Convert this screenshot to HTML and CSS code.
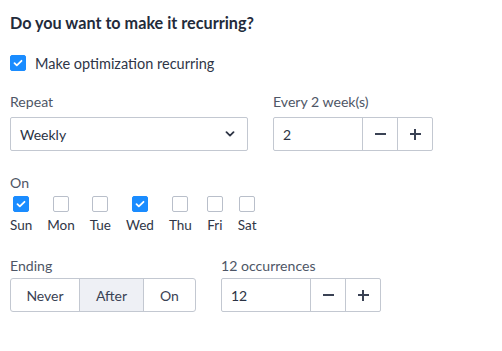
FILE: index.html
```html
<!DOCTYPE html>
<html>
<head>
<meta charset="utf-8">
<link rel="stylesheet" href="styles.css">
</head>
<body>
<div class="panel">
  <h2 class="title">Do you want to make it recurring?</h2>
  <label class="check-row">
    <span class="box checked"><svg viewBox="0 0 16 16" width="16" height="16"><path d="M4.5 8.2l2.3 2.2 4.7-4.6" fill="none" stroke="#fff" stroke-width="1.8" stroke-linecap="round" stroke-linejoin="round"/></svg></span>
    <span class="check-label">Make optimization recurring</span>
  </label>

  <div class="row row-repeat">
    <div class="field field-repeat">
      <div class="label">Repeat</div>
      <div class="select">
        <span>Weekly</span>
        <svg class="chev" viewBox="0 0 10 6" width="10" height="6"><path d="M1.5 1.2L5 4.6l3.5-3.4" fill="none" stroke="#2e3545" stroke-width="1.8" stroke-linecap="round" stroke-linejoin="round"/></svg>
      </div>
    </div>
    <div class="field">
      <div class="label">Every 2 week(s)</div>
      <div class="stepper">
        <div class="num">2</div>
        <div class="btn"><span class="minus"></span></div>
        <div class="btn"><span class="plus"></span></div>
      </div>
    </div>
  </div>

  <div class="days-block">
    <div class="label">On</div>
    <div class="days">
      <div class="day"><span class="box checked"><svg viewBox="0 0 16 16" width="16" height="16"><path d="M4.5 8.2l2.3 2.2 4.7-4.6" fill="none" stroke="#fff" stroke-width="1.8" stroke-linecap="round" stroke-linejoin="round"/></svg></span><span class="day-name">Sun</span></div>
      <div class="day"><span class="box"></span><span class="day-name">Mon</span></div>
      <div class="day"><span class="box"></span><span class="day-name">Tue</span></div>
      <div class="day"><span class="box checked"><svg viewBox="0 0 16 16" width="16" height="16"><path d="M4.5 8.2l2.3 2.2 4.7-4.6" fill="none" stroke="#fff" stroke-width="1.8" stroke-linecap="round" stroke-linejoin="round"/></svg></span><span class="day-name">Wed</span></div>
      <div class="day"><span class="box"></span><span class="day-name">Thu</span></div>
      <div class="day"><span class="box"></span><span class="day-name">Fri</span></div>
      <div class="day"><span class="box"></span><span class="day-name">Sat</span></div>
    </div>
  </div>

  <div class="row row-ending">
    <div class="field">
      <div class="label label-tight">Ending</div>
      <div class="segmented">
        <div class="seg seg-never">Never</div>
        <div class="seg seg-after active">After</div>
        <div class="seg seg-on">On</div>
      </div>
    </div>
    <div class="field">
      <div class="label label-tight">12 occurrences</div>
      <div class="stepper">
        <div class="num">12</div>
        <div class="btn"><span class="minus"></span></div>
        <div class="btn"><span class="plus"></span></div>
      </div>
    </div>
  </div>
</div>
</body>
</html>
```

FILE: styles.css
```css
* { box-sizing: border-box; }
html, body { margin: 0; padding: 0; background: #fff; }
body {
  font-family: Lato, "Noto Sans", sans-serif;
  color: #2b3344;
  width: 502px;
  height: 351px;
  overflow: hidden;
}
.panel { padding: 13px 10px 0 10px; }
.title {
  margin: 0;
  font-size: 16.2px;
  font-weight: 700;
  line-height: 20px;
  color: #232b3b;
}
.check-row {
  display: flex;
  align-items: center;
  margin-top: 20px;
  height: 20px;
}
.box {
  width: 16px;
  height: 16px;
  border: 1px solid #b9bfca;
  border-radius: 2px;
  background: #fff;
  display: inline-flex;
  align-items: center;
  justify-content: center;
  flex: none;
}
.box.checked {
  background: #1a8cff;
  border-color: #1a8cff;
}
.box svg { display: block; margin: -1px; }
.check-label {
  margin-left: 9px;
  font-size: 14.5px;
  color: #2f3647;
}
.label {
  font-size: 14.1px;
  color: #4e5666;
  line-height: 18px;
  margin-bottom: 6px;
}
.label-tight { margin-bottom: 3px; }
.row { display: flex; }
.row-repeat { margin-top: 20px; gap: 25px; }
.field-repeat { width: 238px; }
.select {
  height: 34px;
  border: 1px solid #c3c8d1;
  border-radius: 2px;
  display: flex;
  align-items: center;
  justify-content: space-between;
  padding: 0 12px 0 9px;
  font-size: 14px;
  color: #2b3344;
}
.chev { display: block; }
.stepper {
  display: flex;
  height: 34px;
  border: 1px solid #c3c8d1;
  border-radius: 2px;
}
.num {
  width: 88px;
  display: flex;
  align-items: center;
  padding-left: 9px;
  font-size: 14px;
  color: #2b3344;
}
.btn {
  width: 35px;
  border-left: 1px solid #c3c8d1;
  position: relative;
}
.minus, .plus {
  position: absolute;
  left: 50%;
  top: 50%;
  width: 11px;
  height: 2px;
  margin: -1px 0 0 -5.5px;
  background: #3a4254;
}
.plus::after {
  content: "";
  position: absolute;
  left: 4.5px;
  top: -4.5px;
  width: 2px;
  height: 11px;
  background: #3a4254;
}
.days-block { margin-top: 23px; }
.days-block .label { margin-bottom: 4px; }
.days { display: flex; gap: 15px; }
.day {
  display: flex;
  flex-direction: column;
  align-items: center;
  gap: 4px;
}
.day-name {
  font-size: 13.5px;
  color: #2f3647;
  line-height: 18px;
}
.row-ending { margin-top: 23px; gap: 25px; }
.segmented {
  display: flex;
  height: 34px;
  border: 1px solid #c3c8d1;
  border-radius: 3px;
  overflow: hidden;
  width: 186px;
}
.seg {
  display: flex;
  align-items: center;
  justify-content: center;
  font-size: 14px;
  color: #3a4254;
}
.seg-never { width: 68px; }
.seg-after { width: 65px; border-left: 1px solid #c3c8d1; border-right: 1px solid #c3c8d1; }
.seg-on { flex: 1; }
.seg.active { background: #eef0f5; }
```
